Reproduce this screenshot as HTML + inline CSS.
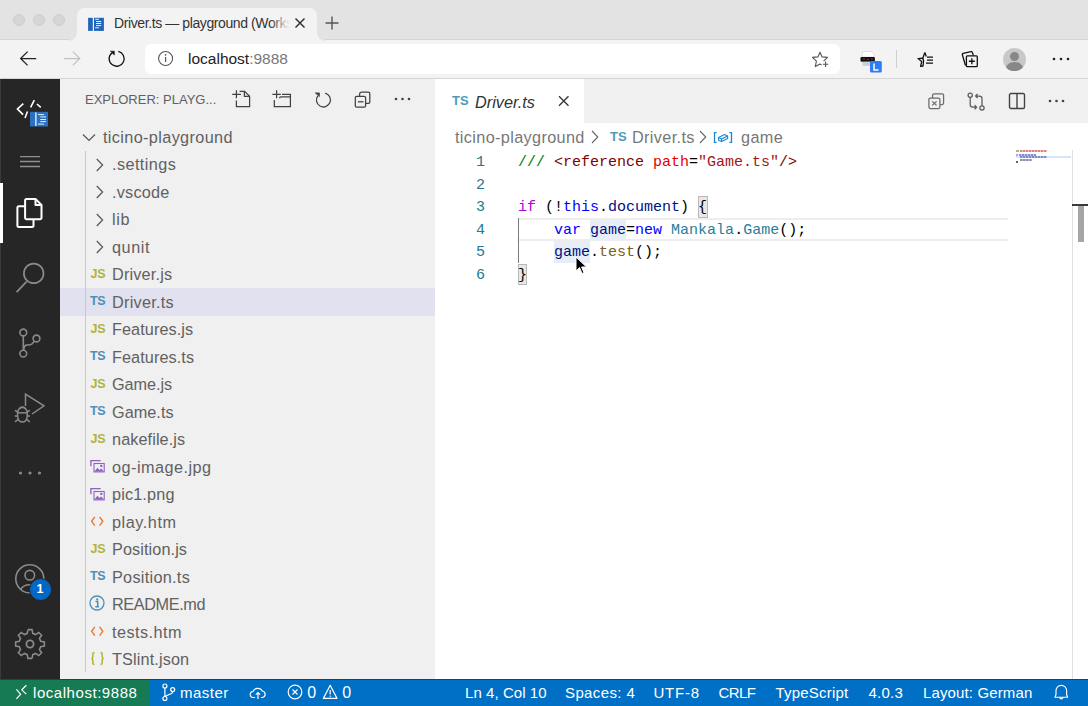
<!DOCTYPE html>
<html><head><meta charset="utf-8">
<style>
*{margin:0;padding:0;box-sizing:border-box}
html,body{width:1088px;height:706px;overflow:hidden;background:#fff;font-family:"Liberation Sans",sans-serif}
.abs{position:absolute}
svg{display:block}
#tabstrip{left:0;top:0;width:1088px;height:40px;background:#e3e3e3;border-bottom:1px solid #d4d4d4}
#toolbar{left:0;top:40px;width:1088px;height:39px;background:#f3f3f3;border-bottom:1px solid #d6d6d6}
#btab{left:77px;top:8px;width:240px;height:33px;background:#f3f3f3;border-radius:8px 8px 0 0}
#addr{left:145px;top:44px;width:695px;height:30px;background:#fff;border-radius:6px}
.tl{position:absolute;top:14px;width:12px;height:12px;border-radius:50%;background:#d6d6d6;border:1px solid #cdcdcd}
#act{left:0;top:79px;width:60px;height:600px;background:#262626}
#side{left:60px;top:79px;width:375px;height:600px;background:#f0f0f0}
#tabs{left:435px;top:79px;width:653px;height:44px;background:#f0f0f0}
#etab{left:435px;top:79px;width:149px;height:44px;background:#fff}
#editor{left:435px;top:123px;width:653px;height:556px;background:#fff}
#status{left:0;top:679px;width:1088px;height:27px;background:#006fc6;border-top:1px solid #3b3b3b;color:#fff;font-size:16.25px}
#remote{left:0;top:680px;width:150px;height:26px;background:#167a55}
.row{position:absolute;left:60px;width:375px;height:27.5px;font-size:16.25px;color:#616161}
.row.sel{background:#e1e1ef}
.row .nm{position:absolute;left:52px;top:3.5px;line-height:20px;white-space:nowrap;letter-spacing:0.35px}
.icw{position:absolute;left:30px;top:6px}
.ic-t{font-family:"Liberation Sans",sans-serif;font-weight:bold;font-size:12.5px;letter-spacing:-0.3px;line-height:16px;display:block}
#guide{left:85px;top:151px;width:1px;height:521px;background:#c8c8c8}
.code{position:absolute;left:518px;font-family:"Liberation Mono",monospace;font-size:15px;line-height:22.5px;white-space:pre;color:#000}
.ln{position:absolute;left:460px;width:25px;text-align:right;font-family:"Liberation Mono",monospace;font-size:15px;line-height:22.5px;color:#237893}
.c-com{color:#008000}.c-tag{color:#800000}.c-att{color:#e50000}.c-str{color:#a31515}
.c-kw{color:#af00db}.c-st{color:#0000ff}.c-var{color:#001080}.c-cls{color:#267f99}.c-fn{color:#795e26}
.si{position:absolute;top:4.5px;height:17px;line-height:17px;white-space:nowrap;color:#fff;font-size:15px}
</style></head><body>
<!-- browser chrome -->
<div class="abs" id="tabstrip"></div>
<div class="tl" style="left:13px"></div>
<div class="tl" style="left:33px"></div>
<div class="tl" style="left:53px"></div>
<div class="abs" id="toolbar"></div>
<div class="abs" id="btab"></div>
<div class="abs" style="left:69px;top:33px;width:8px;height:8px;background:radial-gradient(circle at 0 0,#e3e3e3 7.5px,#f3f3f3 8px)"></div>
<div class="abs" style="left:317px;top:33px;width:8px;height:8px;background:radial-gradient(circle at 100% 0,#e3e3e3 7.5px,#f3f3f3 8px)"></div>
<svg class="abs" style="left:84px;top:12px" width="26" height="24" viewBox="84 12 26 24"><rect x="88.1" y="17.8" width="4.7" height="13.1" fill="#2265b8"/><rect x="94" y="17.8" width="9.9" height="13.1" fill="#2265b8"/><path d="M95.2 19.3 H99 M96 21.5 H101.2 M96 23.5 H101.2 M96 25.6 H101.2 M95.2 27.8 H99" stroke="#e6f2ff" stroke-width="1"/></svg>
<div class="abs" style="left:114px;top:13px;font-size:14px;letter-spacing:-0.4px;line-height:20px;color:#333;white-space:nowrap;width:176px;overflow:hidden">Driver.ts — playground (Workspace)</div>
<div class="abs" style="left:270px;top:10px;width:22px;height:26px;background:linear-gradient(90deg,rgba(243,243,243,0),#f3f3f3 90%)"></div>
<svg class="abs" style="left:294px;top:17px" width="12" height="12" viewBox="0 0 12 12"><path d="M1.5 1.5 L10.5 10.5 M10.5 1.5 L1.5 10.5" stroke="#333" stroke-width="1.5"/></svg>
<svg class="abs" style="left:324px;top:15px" width="16" height="16" viewBox="0 0 16 16"><path d="M8 1.5 V14.5 M1.5 8 H14.5" stroke="#555" stroke-width="1.4"/></svg>
<!-- nav -->
<svg class="abs" style="left:10px;top:44px" width="80" height="30" viewBox="10 44 80 30"><path d="M36.2 58.5 H21 M27.6 51.6 L20.6 58.5 L27.6 65.4" fill="none" stroke="#222" stroke-width="1.25"/></svg>
<svg class="abs" style="left:60px;top:44px" width="30" height="30" viewBox="60 44 30 30"><path d="M64 58.5 H79.4 M72.8 51.6 L79.8 58.5 L72.8 65.4" fill="none" stroke="#c2c2c2" stroke-width="1.25"/></svg>
<svg class="abs" style="left:100px;top:44px" width="32" height="30" viewBox="100 44 32 30"><path d="M118.3 51.4 A7.5 7.5 0 1 1 111.9 52.9" fill="none" stroke="#111" stroke-width="1.3"/><path d="M110.4 51.2 H114.3 V55 Z" fill="#111" stroke="#111" stroke-width="0.6"/></svg>
<div class="abs" id="addr"></div>
<svg class="abs" style="left:150px;top:44px" width="30" height="30" viewBox="150 44 30 30"><circle cx="165.6" cy="58.5" r="7" fill="none" stroke="#555" stroke-width="1.1"/><rect x="165" y="57" width="1.2" height="5" fill="#555"/><circle cx="165.6" cy="54.8" r="0.85" fill="#555"/></svg>
<div class="abs" style="left:188px;top:49px;font-size:15.5px;line-height:20px;color:#222;white-space:nowrap">localhost<span style="color:#777">:9888</span></div>
<svg class="abs" style="left:805px;top:46px" width="30" height="26" viewBox="805 46 30 26"><path d="M823.6 61.2 L827.5 57.4 L822.1 56.9 L820 52.3 L817.9 56.9 L812.5 57.4 L816.4 61.2 L815.3 66.6 L820 64 L821.6 64.9" fill="none" stroke="#555" stroke-width="1.1" stroke-linejoin="round"/><path d="M825.6 61.6 V67 M822.9 64.3 H828.3" stroke="#555" stroke-width="1.1"/></svg>
<!-- extension icon -->
<svg class="abs" style="left:858px;top:50px" width="26" height="24" viewBox="858 50 26 24"><path d="M862.4 57 V51.5 H871.5 L874.1 54.5 V57 Z" fill="#fff" stroke="#ccc" stroke-width="0.6"/><rect x="860.5" y="57" width="14.4" height="4.8" rx="1.2" fill="#111"/><path d="M863 59 H865 M867 59.5 H869 M871 59 H873" stroke="#b02020" stroke-width="1.2"/><rect x="862.5" y="61.8" width="7.5" height="4" fill="#c8d0dc"/><rect x="870" y="61" width="11.8" height="11.5" rx="1.5" fill="#2f7cf6"/><path d="M874 63.5 V70 H878.6" fill="none" stroke="#fff" stroke-width="1.5"/></svg>
<div class="abs" style="left:896px;top:50px;width:1px;height:18px;background:#cfcfcf"></div>
<svg class="abs" style="left:910px;top:46px" width="30" height="26" viewBox="910 46 30 26"><path d="M924.8 52.6 L926.3 56.4 M923.6 61 L923 66 L920.6 66.3 L921.7 61.6 L918 58.6 L922.8 58.2 Z" fill="none" stroke="#111" stroke-width="1.3" stroke-linejoin="round"/><path d="M924.8 52.6 L922.8 58.2" stroke="#111" stroke-width="1.3"/><path d="M927 57.1 H933 M927 60.1 H933 M926 63.1 H933" stroke="#111" stroke-width="1.3"/></svg>
<svg class="abs" style="left:956px;top:46px" width="26" height="26" viewBox="956 46 26 26"><path d="M965.5 65.5 L962.4 55 Q962 53.8 963.2 53.4 L971 51.6 Q972.2 51.4 972.5 52.6 L973.3 55.6" fill="none" stroke="#111" stroke-width="1.3"/><rect x="966.4" y="55.8" width="10.9" height="10.9" rx="1" fill="#f3f3f3" stroke="#111" stroke-width="1.3"/><path d="M971.85 58.3 V64.2 M968.9 61.25 H974.8" stroke="#111" stroke-width="1.3"/></svg>
<div class="abs" style="left:1003px;top:48px;width:23px;height:23px;border-radius:50%;background:#c8c8c8;overflow:hidden"><div style="position:absolute;left:7px;top:4px;width:9px;height:9px;border-radius:50%;background:#888"></div><div style="position:absolute;left:3px;top:14px;width:17px;height:12px;border-radius:50% 50% 0 0;background:#888"></div></div>
<svg class="abs" style="left:1052px;top:57px" width="18" height="4" viewBox="0 0 18 4"><circle cx="2" cy="2" r="1.3" fill="#222"/><circle cx="9" cy="2" r="1.3" fill="#222"/><circle cx="16" cy="2" r="1.3" fill="#222"/></svg>

<!-- VS Code -->
<div class="abs" id="act"></div>
<div class="abs" style="left:0;top:79px;width:1px;height:600px;background:#3a3a3a"></div>
<div class="abs" id="side"></div>
<div class="abs" id="tabs"></div>
<div class="abs" id="etab"></div>
<div class="abs" id="editor"></div>

<!-- activity bar icons -->
<svg class="abs" style="left:0;top:92px" width="60" height="40" viewBox="0 92 60 40"><path d="M23.3 103.6 L17.5 109 L23.1 114.6" fill="none" stroke="#fff" stroke-width="1.7"/><path d="M27.5 111.5 L25 118 M34.3 100.2 L30.6 107.3 M36.9 104 L40.8 107.3" stroke="#fff" stroke-width="1.6"/><rect x="30" y="111.8" width="18" height="14.7" fill="#2a72c0"/><rect x="35.1" y="112.4" width="1.5" height="13.5" fill="#cfe6fb"/><path d="M38 114.6 H44 M40.3 116.9 H46 M40.3 119.5 H46 M40.3 121.6 H46 M38 124.1 H44" stroke="#e0eefc" stroke-width="1"/></svg>
<svg class="abs" style="left:8px;top:140px" width="44" height="40" viewBox="8 140 44 40"><path d="M20 156.6 H40 M20 161.5 H40 M20 166.5 H40" stroke="#8f8f8f" stroke-width="1.3"/></svg>
<div class="abs" style="left:0;top:183px;width:2.5px;height:60px;background:#fff"></div>
<svg class="abs" style="left:10px;top:190px" width="40" height="45" viewBox="10 190 40 45"><g fill="none" stroke="#fff" stroke-width="2" stroke-linejoin="round"><path d="M35.5 199 H26.6 A1.5 1.5 0 0 0 25.1 200.5 V217.8 A1.5 1.5 0 0 0 26.6 219.3 H40 A1.5 1.5 0 0 0 41.5 217.8 V205 Z"/><path d="M35.5 199 V205 H41.5"/><path d="M25.1 206.3 H18.9 A1.5 1.5 0 0 0 17.4 207.8 V225.4 A1.5 1.5 0 0 0 18.9 226.9 H32 A1.5 1.5 0 0 0 33.5 225.4 V219.3"/></g></svg>
<svg class="abs" style="left:8px;top:255px" width="44" height="45" viewBox="8 255 44 45"><circle cx="33.7" cy="273.4" r="9.8" fill="none" stroke="#8a8a8a" stroke-width="1.7"/><path d="M26.6 281.6 L16.6 292.2" stroke="#8a8a8a" stroke-width="1.8"/></svg>
<svg class="abs" style="left:8px;top:320px" width="44" height="45" viewBox="8 320 44 45"><g fill="none" stroke="#8a8a8a" stroke-width="1.6"><circle cx="23.3" cy="332.5" r="3.4"/><circle cx="36.5" cy="338.5" r="3.4"/><circle cx="23.3" cy="353.6" r="3.4"/><path d="M23.3 335.9 V350.2"/><path d="M34.2 341 Q32.5 344.8 29 345 H26.5 Q24 345.6 23.8 349.8"/></g></svg>
<svg class="abs" style="left:8px;top:375px" width="44" height="55" viewBox="8 375 44 55"><g fill="none" stroke="#8a8a8a" stroke-width="1.5"><path d="M25.5 406 V394 L44 405.8 L32 414"/><path d="M17.6 413 A4.8 5.5 0 0 1 27.2 413 V416.5 A4.8 5.5 0 0 1 17.6 416.5 Z"/><path d="M17.6 412.8 H27.2"/><path d="M19.8 409 A2.6 2 0 0 1 25 409"/><path d="M15 410.3 L17.6 412 M29.8 410.3 L27.2 412 M14.8 416 H17.6 M27.2 416 H30 M15 421.8 L17.8 419.6 M29.8 421.8 L27 419.6"/></g></svg>
<svg class="abs" style="left:18px;top:470px" width="24" height="6" viewBox="0 0 24 6"><circle cx="2.5" cy="3" r="1.6" fill="#8a8a8a"/><circle cx="12" cy="3" r="1.6" fill="#8a8a8a"/><circle cx="21.5" cy="3" r="1.6" fill="#8a8a8a"/></svg>
<svg class="abs" style="left:10px;top:558px" width="40" height="40" viewBox="10 558 40 40"><g fill="none" stroke="#8a8a8a" stroke-width="1.6"><circle cx="29.8" cy="578.8" r="14"/><circle cx="29.8" cy="575.2" r="4.8"/><path d="M20.5 589.5 A10.5 9 0 0 1 39.1 589.5"/></g></svg>
<div class="abs" style="left:28.5px;top:577.8px;width:23px;height:23px;border-radius:50%;background:#0068c8;border:1.5px solid #262626;color:#fff;font-size:12.5px;font-weight:bold;text-align:center;line-height:20px">1</div>
<svg class="abs" style="left:13px;top:627px" width="34" height="34" viewBox="0 0 34 34"><path d="M14.5 2.5 H19.5 L20.3 6.8 L23.6 8.2 L27.2 5.7 L30.3 8.8 L27.8 12.4 L29.2 15.7 L33.5 16.5 V21.5" fill="none"/><g fill="none" stroke="#8a8a8a" stroke-width="1.8"><circle cx="17" cy="17" r="3.6"/><path d="M14.6 2 H19.4 L20.2 6.3 L23.5 7.7 L27.1 5.2 L30.5 8.6 L28 12.2 L29.4 15.5 L33.7 16.3 V21.1 L29.4 21.9 L28 25.2 L30.5 28.8 L27.1 32.2 L23.5 29.7 L20.2 31.1 L19.4 35.4 M14.6 2 L13.8 6.3 L10.5 7.7 L6.9 5.2 L3.5 8.6 L6 12.2 L4.6 15.5 L0.3 16.3 V21.1 L4.6 21.9 L6 25.2 L3.5 28.8 L6.9 32.2 L10.5 29.7 L13.8 31.1 L14.6 35.4 H19.4" transform="translate(17 17) scale(0.86) translate(-17 -18.7)"/></g></svg>

<!-- sidebar header -->
<div class="abs" style="left:85px;top:91px;font-size:13px;line-height:18px;color:#616161;white-space:nowrap">EXPLORER: PLAYG...</div>
<svg class="abs" style="left:228px;top:86px" width="26" height="24" viewBox="228 86 26 24"><g fill="none" stroke="#424242" stroke-width="1.25"><path d="M232.2 94.4 H240.9 M236.4 90.2 V98.2"/><path d="M236.4 100.5 V106.6 H249.6 V96.2 L244.6 91.4 H239.6"/><path d="M244.4 91.5 V96.4 H249.6"/></g></svg>
<svg class="abs" style="left:268px;top:86px" width="26" height="24" viewBox="268 86 26 24"><g fill="none" stroke="#424242" stroke-width="1.25"><path d="M272.4 94.4 H280.8 M276.6 90.2 V98.2"/><path d="M274.3 100 V106.6 H290.4 V94.4 H282"/><path d="M290.4 96.8 H281 Q279.6 96.8 279.6 98.2"/></g></svg>
<svg class="abs" style="left:308px;top:86px" width="26" height="24" viewBox="308 86 26 24"><path d="M325.2 93.2 A7 7 0 1 1 317.8 95.8" fill="none" stroke="#424242" stroke-width="1.25"/><path d="M315.3 92.9 H319.4 V96.6 Z" fill="#424242" stroke="#424242" stroke-width="0.8" stroke-linejoin="round"/></svg>
<svg class="abs" style="left:350px;top:86px" width="26" height="24" viewBox="350 86 26 24"><g fill="none" stroke="#424242" stroke-width="1.25"><path d="M361 92.6 V92.6 A0.8 0.8 0 0 1 361.8 92.1 H368.4 A1.4 1.4 0 0 1 369.8 93.5 V102 A1.4 1.4 0 0 1 368.4 103.4 H365.6"/><rect x="355.3" y="96.3" width="10.3" height="10.9" rx="1.5"/><path d="M357.9 101.8 H363.5"/></g><path d="M359.6 96.3 V94 A1.6 1.6 0 0 1 361.2 92.4" fill="none" stroke="#424242" stroke-width="1.25"/></svg>
<svg class="abs" style="left:394px;top:97px" width="18" height="4" viewBox="0 0 18 4"><circle cx="2" cy="2" r="1.3" fill="#424242"/><circle cx="8.5" cy="2" r="1.3" fill="#424242"/><circle cx="15" cy="2" r="1.3" fill="#424242"/></svg>

<div class="row" style="top:123.0px"><span class="icw" style="left:21px;top:10px"><svg class="chev" width="16" height="10" viewBox="0 0 16 10"><path d="M2 1.5 L8 7.5 L14 1.5" fill="none" stroke="#555" stroke-width="1.2"/></svg></span><span class="nm" style="left:43px;letter-spacing:0.36px">ticino-playground</span></div>
<div class="row" style="top:150.5px"><span class="icw" style="left:35px;top:6px"><svg class="chev" width="10" height="16" viewBox="0 0 10 16"><path d="M1.8 2 L7.6 8 L1.8 14" fill="none" stroke="#555" stroke-width="1.2"/></svg></span><span class="nm" style="letter-spacing:0.42px">.settings</span></div>
<div class="row" style="top:178.0px"><span class="icw" style="left:35px;top:6px"><svg class="chev" width="10" height="16" viewBox="0 0 10 16"><path d="M1.8 2 L7.6 8 L1.8 14" fill="none" stroke="#555" stroke-width="1.2"/></svg></span><span class="nm" style="letter-spacing:0.23px">.vscode</span></div>
<div class="row" style="top:205.5px"><span class="icw" style="left:35px;top:6px"><svg class="chev" width="10" height="16" viewBox="0 0 10 16"><path d="M1.8 2 L7.6 8 L1.8 14" fill="none" stroke="#555" stroke-width="1.2"/></svg></span><span class="nm" style="letter-spacing:0.7px">lib</span></div>
<div class="row" style="top:233.0px"><span class="icw" style="left:35px;top:6px"><svg class="chev" width="10" height="16" viewBox="0 0 10 16"><path d="M1.8 2 L7.6 8 L1.8 14" fill="none" stroke="#555" stroke-width="1.2"/></svg></span><span class="nm" style="letter-spacing:0.55px">qunit</span></div>
<div class="row" style="top:260.5px"><span class="icw" style="left:30.5px;top:5px"><span class="ic-t" style="color:#b2b33a">JS</span></span><span class="nm" style="letter-spacing:0.17px">Driver.js</span></div>
<div class="row sel" style="top:288.0px"><span class="icw" style="left:30px;top:5px"><span class="ic-t" style="color:#4d8fb8">TS</span></span><span class="nm" style="letter-spacing:0.26px">Driver.ts</span></div>
<div class="row" style="top:315.5px"><span class="icw" style="left:30.5px;top:5px"><span class="ic-t" style="color:#b2b33a">JS</span></span><span class="nm" style="letter-spacing:0.07px">Features.js</span></div>
<div class="row" style="top:343.0px"><span class="icw" style="left:30px;top:5px"><span class="ic-t" style="color:#4d8fb8">TS</span></span><span class="nm" style="letter-spacing:0.08px">Features.ts</span></div>
<div class="row" style="top:370.5px"><span class="icw" style="left:30.5px;top:5px"><span class="ic-t" style="color:#b2b33a">JS</span></span><span class="nm" style="letter-spacing:-0.07px">Game.js</span></div>
<div class="row" style="top:398.0px"><span class="icw" style="left:30px;top:5px"><span class="ic-t" style="color:#4d8fb8">TS</span></span><span class="nm" style="letter-spacing:0.03px">Game.ts</span></div>
<div class="row" style="top:425.5px"><span class="icw" style="left:30.5px;top:5px"><span class="ic-t" style="color:#b2b33a">JS</span></span><span class="nm" style="letter-spacing:0.09px">nakefile.js</span></div>
<div class="row" style="top:453.0px"><span class="icw" style="left:30px;top:6px"><svg width="18" height="16" viewBox="0 0 18 16"><path d="M0.9 7.3 V1.7 H10.7" fill="none" stroke="#8f62c2" stroke-width="1.3"/><rect x="4" y="4.5" width="10.2" height="8.4" fill="none" stroke="#8f62c2" stroke-width="1.1"/><path d="M4.5 12.5 L7.4 8.8 L9.4 11 L11.2 9.6 L13.8 12.5 Z" fill="#8f62c2"/><circle cx="11.3" cy="6.9" r="1.2" fill="#8f62c2"/></svg></span><span class="nm" style="letter-spacing:0.47px">og-image.jpg</span></div>
<div class="row" style="top:480.5px"><span class="icw" style="left:30px;top:6px"><svg width="18" height="16" viewBox="0 0 18 16"><path d="M0.9 7.3 V1.7 H10.7" fill="none" stroke="#8f62c2" stroke-width="1.3"/><rect x="4" y="4.5" width="10.2" height="8.4" fill="none" stroke="#8f62c2" stroke-width="1.1"/><path d="M4.5 12.5 L7.4 8.8 L9.4 11 L11.2 9.6 L13.8 12.5 Z" fill="#8f62c2"/><circle cx="11.3" cy="6.9" r="1.2" fill="#8f62c2"/></svg></span><span class="nm" style="letter-spacing:0.14px">pic1.png</span></div>
<div class="row" style="top:508.0px"><span class="icw" style="left:30px;top:6px"><svg width="16" height="16" viewBox="0 0 16 16"><path d="M4.8 2.9 L1.6 7.3 L4.8 11.7 M9.6 2.9 L12.8 7.3 L9.6 11.7" fill="none" stroke="#e37933" stroke-width="1.4"/></svg></span><span class="nm" style="letter-spacing:0.54px">play.htm</span></div>
<div class="row" style="top:535.5px"><span class="icw" style="left:30.5px;top:5px"><span class="ic-t" style="color:#b2b33a">JS</span></span><span class="nm" style="letter-spacing:0.09px">Position.js</span></div>
<div class="row" style="top:563.0px"><span class="icw" style="left:30px;top:5px"><span class="ic-t" style="color:#4d8fb8">TS</span></span><span class="nm" style="letter-spacing:0.28px">Position.ts</span></div>
<div class="row" style="top:590.5px"><span class="icw" style="left:29px;top:4px"><svg width="16" height="16" viewBox="0 0 16 16"><circle cx="8" cy="8" r="7" fill="none" stroke="#4d8fb8" stroke-width="1.3"/><path d="M6.5 6.6 H8.7 V11.6 M6.4 11.8 H10" fill="none" stroke="#4d8fb8" stroke-width="1.5"/><circle cx="8.2" cy="4.4" r="1.1" fill="#4d8fb8"/></svg></span><span class="nm" style="letter-spacing:-0.39px">README.md</span></div>
<div class="row" style="top:618.0px"><span class="icw" style="left:30px;top:6px"><svg width="16" height="16" viewBox="0 0 16 16"><path d="M4.8 2.9 L1.6 7.3 L4.8 11.7 M9.6 2.9 L12.8 7.3 L9.6 11.7" fill="none" stroke="#e37933" stroke-width="1.4"/></svg></span><span class="nm" style="letter-spacing:0.44px">tests.htm</span></div>
<div class="row" style="top:645.5px"><span class="icw" style="left:30px;top:5.5px"><svg width="16" height="16" viewBox="0 0 16 16"><path d="M4.5 1.5 Q2.8 1.5 2.8 3.5 V5.8 Q2.8 7.5 1.3 7.5 Q2.8 7.5 2.8 9.2 V11.5 Q2.8 13.5 4.5 13.5 M10.5 1.5 Q12.2 1.5 12.2 3.5 V5.8 Q12.2 7.5 13.7 7.5 Q12.2 7.5 12.2 9.2 V11.5 Q12.2 13.5 10.5 13.5" fill="none" stroke="#b2b33a" stroke-width="1.5"/></svg></span><span class="nm" style="letter-spacing:0.13px">TSlint.json</span></div>
<div class="abs" id="guide"></div>

<!-- editor tab -->
<div class="abs" style="left:452px;top:93px;font-size:13px;font-weight:bold;color:#519aba;line-height:16px">TS</div>
<div class="abs" style="left:475px;top:92px;font-size:16.25px;font-style:italic;color:#333;line-height:20px">Driver.ts</div>
<svg class="abs" style="left:557px;top:95px" width="13" height="13" viewBox="0 0 13 13"><path d="M2 1.2 L11.5 10.7 M11.5 1.2 L2 10.7" stroke="#333" stroke-width="1.3"/></svg>
<!-- editor actions -->
<svg class="abs" style="left:924px;top:88px" width="24" height="24" viewBox="924 88 24 24"><g fill="none" stroke="#6a6a6a" stroke-width="1.25"><path d="M932.6 98 V95.3 A1.4 1.4 0 0 1 934 93.9 H942.2 A1.4 1.4 0 0 1 943.6 95.3 V103.1 A1.4 1.4 0 0 1 942.2 104.5 H940.2"/><rect x="928.9" y="98.2" width="11" height="10.3" rx="1.4"/><path d="M932.2 101.4 L936.6 105.4 M936.6 101.4 L932.2 105.4"/></g></svg>
<svg class="abs" style="left:964px;top:88px" width="24" height="24" viewBox="964 88 24 24"><g fill="none" stroke="#5a5a5a" stroke-width="1.25"><circle cx="970.2" cy="95.3" r="2.1"/><circle cx="982" cy="108" r="2.1"/><path d="M970.2 97.4 V104.6 Q970.2 107.2 972.8 107.2 H976.5 M974.6 105.2 L976.6 107.2 L974.6 109.2"/><path d="M982 105.9 V98.6 Q982 96 979.4 96 H975.7 M977.6 94 L975.6 96 L977.6 98"/></g></svg>
<svg class="abs" style="left:1008px;top:92px" width="18" height="18" viewBox="0 0 18 18"><rect x="1.5" y="1.5" width="15" height="15" rx="1.5" fill="none" stroke="#424242" stroke-width="1.4"/><path d="M9 1.5 V16.5" stroke="#424242" stroke-width="1.4"/></svg>
<svg class="abs" style="left:1047.5px;top:99px" width="18" height="4" viewBox="0 0 18 4"><circle cx="2" cy="2" r="1.3" fill="#424242"/><circle cx="8.5" cy="2" r="1.3" fill="#424242"/><circle cx="15" cy="2" r="1.3" fill="#424242"/></svg>

<!-- breadcrumbs -->
<div class="abs" style="left:455px;top:127px;font-size:16.25px;line-height:20px;color:#777;white-space:nowrap;letter-spacing:0.35px">ticino-playground</div>
<svg class="abs" style="left:590px;top:129px" width="12" height="16" viewBox="0 0 12 16"><path d="M2 2 L7.8 8 L2 14" fill="none" stroke="#666" stroke-width="1.1"/></svg>
<div class="abs" style="left:610px;top:129px;font-size:13px;font-weight:bold;color:#519aba;line-height:16px">TS</div>
<div class="abs" style="left:632px;top:127px;font-size:16.25px;line-height:20px;color:#777;white-space:nowrap;letter-spacing:0.35px">Driver.ts</div>
<svg class="abs" style="left:698px;top:129px" width="12" height="16" viewBox="0 0 12 16"><path d="M2 2 L7.8 8 L2 14" fill="none" stroke="#666" stroke-width="1.1"/></svg>
<svg class="abs" style="left:710px;top:128px" width="26" height="18" viewBox="710 128 26 18"><path d="M716.6 132.6 H714.5 V142.3 H716.6 M729.4 132.6 H731.5 V142.3 H729.4" fill="none" stroke="#1a85d8" stroke-width="1.3"/><path d="M718.6 137.6 L724.6 134.6 L727.6 136 V138.6 L721.6 141.6 L718.6 140.2 Z M718.6 137.6 L721.6 139 L727.6 136 M721.6 139 V141.6" fill="none" stroke="#1a85d8" stroke-width="1.1" stroke-linejoin="round"/></svg>
<div class="abs" style="left:741px;top:127px;font-size:16.25px;line-height:20px;color:#777;white-space:nowrap;letter-spacing:0.35px">game</div>

<!-- code -->
<div class="abs" style="left:518px;top:218px;width:490px;height:22.5px;border-top:2px solid #eeeeee;border-bottom:2px solid #eeeeee"></div>
<div class="abs" style="left:518px;top:218px;width:1.2px;height:45px;background:#7a7a7a"></div>
<div class="abs" style="left:590px;top:219px;width:36px;height:21px;background:#e7eef8"></div>
<div class="abs" style="left:554px;top:240.5px;width:36px;height:22.5px;background:#e7eef8"></div>
<div class="abs" style="left:698px;top:196px;width:9.5px;height:21.5px;background:#e6eae6;border:1px solid #b9b9b9"></div>
<div class="abs" style="left:518px;top:263.5px;width:8.5px;height:21.5px;background:#e6eae6;border:1px solid #b9b9b9"></div>
<div class="ln" style="top:152.0px">1</div>
<div class="ln" style="top:174.5px">2</div>
<div class="ln" style="top:197.0px">3</div>
<div class="ln" style="top:219.5px">4</div>
<div class="ln" style="top:242.0px">5</div>
<div class="ln" style="top:264.5px">6</div>
<div class="code" style="top:152.0px"><span class="c-com">///</span> <span class="c-tag">&lt;reference</span> <span class="c-att">path</span>=<span class="c-str">"Game.ts"</span><span class="c-tag">/&gt;</span></div>
<div class="code" style="top:197.0px"><span class="c-kw">if</span> (!<span class="c-st">this</span>.<span class="c-var">document</span>) {</div>
<div class="code" style="top:219.5px">    <span class="c-st">var</span> <span class="c-var">game</span>=<span class="c-st">new</span> <span class="c-cls">Mankala</span>.<span class="c-cls">Game</span>();</div>
<div class="code" style="top:242.0px">    <span class="c-var">game</span>.<span class="c-fn">test</span>();</div>
<div class="code" style="top:264.5px">}</div>
<!-- mouse cursor -->
<svg class="abs" style="left:575px;top:256px" width="14" height="20" viewBox="0 0 14 20"><path d="M1 1 V15 L4.5 11.5 L7 17.5 L9 16.7 L6.6 11 H11.5 Z" fill="#000" stroke="#fff" stroke-width="1"/></svg>
<!-- minimap -->
<div class="abs" style="left:1016px;top:155.6px;width:55px;height:2.3px;background:#d4e6fa"></div>
<div class="abs" style="left:1016px;top:150px;width:3px;height:2px;background:#8cc48c"></div>
<div class="abs" style="left:1020px;top:150px;width:27px;height:2px;background:repeating-linear-gradient(90deg,#e08080 0 2px,#f3c0c0 2px 3px)"></div>
<div class="abs" style="left:1016px;top:154px;width:1.5px;height:2px;background:#d090e0"></div>
<div class="abs" style="left:1019px;top:154px;width:17px;height:2px;background:repeating-linear-gradient(90deg,#8090d0 0 2px,#c0c8f0 2px 3px)"></div>
<div class="abs" style="left:1020px;top:156.3px;width:27px;height:1.8px;background:repeating-linear-gradient(90deg,#7a8ad0 0 2px,#b0c0f0 2px 3px)"></div>
<div class="abs" style="left:1020px;top:158.5px;width:12px;height:2px;background:repeating-linear-gradient(90deg,#8090d0 0 2px,#d0b090 2px 3px)"></div>
<div class="abs" style="left:1016px;top:160.5px;width:1.5px;height:2px;background:#666"></div>
<div class="abs" style="left:1072px;top:150px;width:1px;height:529px;background:#e0e0e0"></div>
<div class="abs" style="left:1072px;top:204px;width:16px;height:2px;background:#3a3a3a"></div>
<div class="abs" style="left:1077.5px;top:206px;width:6.2px;height:36px;background:#a6a6a6"></div>

<!-- status bar -->
<div class="abs" id="status"></div>
<div class="abs" id="remote"></div>
<svg class="abs" style="left:10px;top:682px" width="20" height="20" viewBox="10 682 20 20"><path d="M16.4 689.4 L20.65 694.2 L16.4 698.8 M26.4 685.3 L21.8 689.8 L26.2 694.2" fill="none" stroke="#fff" stroke-width="1.2"/></svg>
<div class="abs" style="top:679px;left:0;width:1088px;height:27px">
<div class="si" style="left:33px;letter-spacing:0.55px">localhost:9888</div>
<svg class="abs" style="left:160px;top:4px" width="16" height="20" viewBox="160 683 16 20"><g fill="none" stroke="#fff" stroke-width="1.2"><circle cx="164.9" cy="686" r="2"/><circle cx="172.7" cy="689.6" r="2"/><circle cx="164.9" cy="698.5" r="2"/><path d="M164.9 688 V696.5 M172.7 691.6 Q172.7 694 169 694.5 L165.2 696.4"/></g></svg>
<div class="si" style="left:180px;letter-spacing:0.5px">master</div>
<svg class="abs" style="left:248px;top:5px" width="20" height="18" viewBox="248 684 20 18"><g fill="none" stroke="#fff" stroke-width="1.2"><path d="M255 697.5 H253.5 A3 3 0 0 1 253 691.5 A5 4.6 0 0 1 262.3 691 A3.3 3.3 0 0 1 262.5 697.5 H261"/><path d="M258 699 V692.5 M255.8 694.7 L258 692.5 L260.2 694.7"/></g></svg>
<svg class="abs" style="left:287px;top:5.2px" width="16" height="16" viewBox="0 0 16 16"><circle cx="8" cy="8" r="6.8" fill="none" stroke="#fff" stroke-width="1.2"/><path d="M5.5 5.5 L10.5 10.5 M10.5 5.5 L5.5 10.5" stroke="#fff" stroke-width="1.2"/></svg>
<div class="si" style="left:307.3px;top:5px;font-size:16px">0</div>
<svg class="abs" style="left:321.5px;top:5px" width="17" height="16" viewBox="0 0 17 16"><path d="M8.2 1.3 L15 14.4 H1.4 Z" fill="none" stroke="#fff" stroke-width="1.2" stroke-linejoin="round"/><path d="M8.2 6 V10.5" stroke="#fff" stroke-width="1.2"/><circle cx="8.2" cy="12.3" r="0.7" fill="#fff"/></svg>
<div class="si" style="left:342.3px;top:5px;font-size:16px">0</div>
<div class="si" style="left:465px;letter-spacing:0.06px">Ln 4, Col 10</div>
<div class="si" style="left:565px;letter-spacing:0.38px">Spaces: 4</div>
<div class="si" style="left:653.5px;letter-spacing:0.75px">UTF-8</div>
<div class="si" style="left:718.5px;letter-spacing:-0.6px">CRLF</div>
<div class="si" style="left:775.5px;letter-spacing:0.2px">TypeScript</div>
<div class="si" style="left:868.5px;letter-spacing:0.22px">4.0.3</div>
<div class="si" style="left:923px;letter-spacing:0.13px">Layout: German</div>
<svg class="abs" style="left:1050px;top:3.8px" width="22" height="22" viewBox="1050 683 22 22"><path d="M1056 694.5 V690.6 A5.3 5.3 0 0 1 1066.6 690.6 V694.5 L1067.6 697.2 H1055 Z" fill="none" stroke="#fff" stroke-width="1.15" stroke-linejoin="round"/><path d="M1059.6 697.6 A1.8 1.8 0 0 0 1063 697.6" fill="none" stroke="#fff" stroke-width="1.15"/></svg>
</div>
</body></html>
